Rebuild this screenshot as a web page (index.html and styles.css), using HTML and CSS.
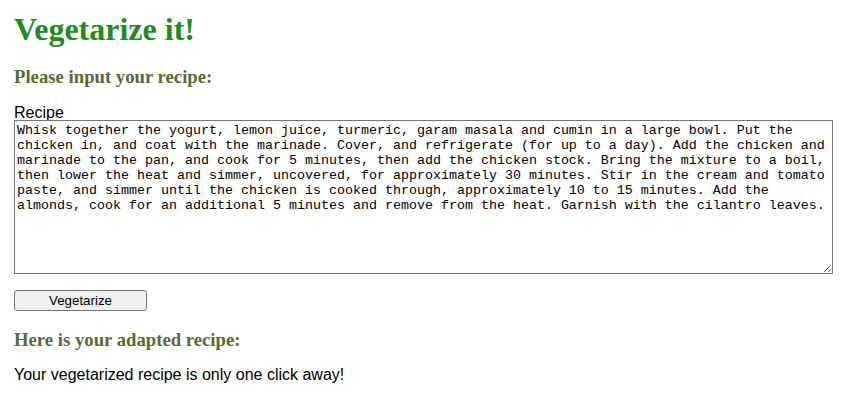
FILE: index.html
```html
<!DOCTYPE html>
<html>
<head>
<meta charset="utf-8">
<link rel="stylesheet" href="styles.css">
</head>
<body>
<div class="page">
  <h1 class="title">Vegetarize it!</h1>
  <h3 class="subtitle">Please input your recipe:</h3>
  <form class="form">
    <label class="label" for="recipe">Recipe</label>
    <textarea id="recipe" class="recipe">Whisk together the yogurt, lemon juice, turmeric, garam masala and cumin in a large bowl. Put the chicken in, and coat with the marinade. Cover, and refrigerate (for up to a day). Add the chicken and marinade to the pan, and cook for 5 minutes, then add the chicken stock. Bring the mixture to a boil, then lower the heat and simmer, uncovered, for approximately 30 minutes. Stir in the cream and tomato paste, and simmer until the chicken is cooked through, approximately 10 to 15 minutes. Add the almonds, cook for an additional 5 minutes and remove from the heat. Garnish with the cilantro leaves.</textarea>
    <button type="button" class="btn">Vegetarize</button>
  </form>
  <h3 class="subtitle subtitle-result">Here is your adapted recipe:</h3>
  <p class="result">Your vegetarized recipe is only one click away!</p>
</div>
</body>
</html>
```

FILE: styles.css
```css
html, body {
  margin: 0;
  padding: 0;
  background: #fff;
}
.page {
  padding: 0 14px;
  font-family: "Liberation Sans", Arial, sans-serif;
  font-size: 16px;
  color: #000;
}
.title {
  font-family: "Liberation Serif", "Times New Roman", serif;
  font-weight: bold;
  font-size: 32px;
  color: #228b22;
  margin: 0;
  padding-top: 11px;
  line-height: 37px;
}
.subtitle {
  font-family: "Liberation Serif", "Times New Roman", serif;
  font-weight: bold;
  font-size: 18.72px;
  color: #556b2f;
  margin: 18px 0;
  line-height: 22px;
}
.subtitle-result {
  margin-bottom: 15px;
}
.form {
  display: flex;
  flex-direction: column;
  align-items: flex-start;
}
.label {
  font-size: 16px;
  line-height: 16px;
  margin-top: -1px;
  margin-bottom: -1px;
}
.recipe {
  box-sizing: border-box;
  width: 819px;
  height: 154px;
  margin: 0;
  padding: 2px;
  border: 1px solid #767676;
  font-family: "Liberation Mono", "Courier New", monospace;
  font-size: 13.333px;
  line-height: 15px;
  color: #000;
  resize: vertical;
}
.btn {
  margin-top: 16px;
  width: 133px;
  height: 21px;
  padding: 0;
  font-family: "Liberation Sans", Arial, sans-serif;
  font-size: 13.333px;
  color: #000;
  background: #efefef;
  border: 1px solid #767676;
  border-radius: 3px;
}
.result {
  margin: 0;
  line-height: 18px;
}
```
